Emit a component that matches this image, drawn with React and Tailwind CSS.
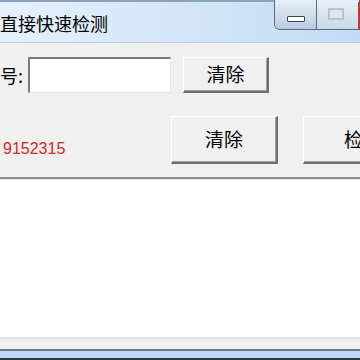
import React from "react";

const cjk = { fontFamily: '"Noto Sans CJK SC", "Microsoft YaHei", sans-serif' };

function WinButton({ className = "", children }) {
  return (
    <div
      className={
        "flex shrink-0 items-center bg-[#f0f0f0] border-t border-l border-t-white border-l-white border-r-2 border-b-2 border-r-[#6e6e6e] border-b-[#6e6e6e] shadow-[inset_-1px_-1px_0_#a0a0a0] text-[19px] text-black " +
        className
      }
      style={cjk}
    >
      {children}
    </div>
  );
}

export default function App() {
  return (
    <div className="w-[360px] h-[360px] bg-[#f0f0f0] flex flex-col overflow-hidden relative">
      {/* title bar */}
      <div className="h-[43px] shrink-0 border-t-2 border-t-[#8aa2bc] border-b border-b-[#b9cde3] bg-gradient-to-r from-[#e6f0fb] via-[#d4e6f8] to-[#c2dbf5] flex items-center relative">
        <span className="text-[18px] text-black leading-none mt-[1px]" style={cjk}>
          直接快速检测
        </span>
        <div className="absolute right-0 top-[-2px] h-[30px] flex border border-[#5a6a80] border-t-0 rounded-bl-[6px] overflow-hidden">
          <div className="w-[42px] h-full bg-gradient-to-b from-[#e9f0f8] to-[#b8cbe2] flex items-end justify-center pb-[7px] border-r border-r-[#5a6a80]">
            <div className="w-[18px] h-[6px] bg-white border border-[#3a4454] rounded-[1px]" />
          </div>
          <div className="w-[42px] h-full bg-gradient-to-b from-[#e9f0f8] to-[#c9d8ea] flex items-start justify-start pl-[11px] pt-[8px]">
            <div className="w-[16px] h-[12px] border-2 border-[#b8c2cc] bg-[#dde5ee]" />
          </div>
        </div>
        <div className="absolute right-0 top-0 w-[2px] h-[28px] bg-[#c0392b]" />
      </div>

      {/* row 1 */}
      <div className="flex items-center h-[36px] mt-[14px] shrink-0">
        <span className="text-[18px] text-black w-[28px] shrink-0" style={cjk}>号:</span>
        <div className="w-[143px] h-[36px] shrink-0 bg-white border-t-2 border-l-2 border-t-[#7a7a7a] border-l-[#7a7a7a] border-r border-b border-r-[#e3e3e3] border-b-[#e3e3e3]" />
        <WinButton className="ml-[12px] w-[86px] h-[36px] justify-center">清除</WinButton>
      </div>

      {/* row 2 */}
      <div className="flex items-center h-[48px] mt-[23px] shrink-0">
        <span
          className="text-[16px] text-[#d02828] w-[171px] shrink-0 pl-[3px] mt-[18px]"
          style={{ fontFamily: '"Liberation Sans", Arial, sans-serif' }}
        >
          9152315
        </span>
        <WinButton className="w-[107px] h-[48px] justify-center">清除</WinButton>
        <WinButton className="ml-[25px] w-[107px] h-[48px] justify-start pl-[40px]">检测</WinButton>
      </div>

      {/* separator */}
      <div className="mt-[13px] h-[3px] shrink-0 border-t-2 border-t-[#8c8c8c] border-b border-b-[#e8e8e8]" />

      {/* white area */}
      <div className="flex-1 bg-white" />

      {/* bottom frame */}
      <div className="h-[2px] bg-[#dfe3e3] shrink-0" />
      <div className="h-[10px] bg-[#f0f0f0] shrink-0" />
      <div className="h-[2px] bg-[#6a7888] shrink-0" />
      <div className="h-[7px] bg-[#bcd8f5] shrink-0" />
      <div className="h-[2px] bg-[#2d3a48] shrink-0" />
    </div>
  );
}
